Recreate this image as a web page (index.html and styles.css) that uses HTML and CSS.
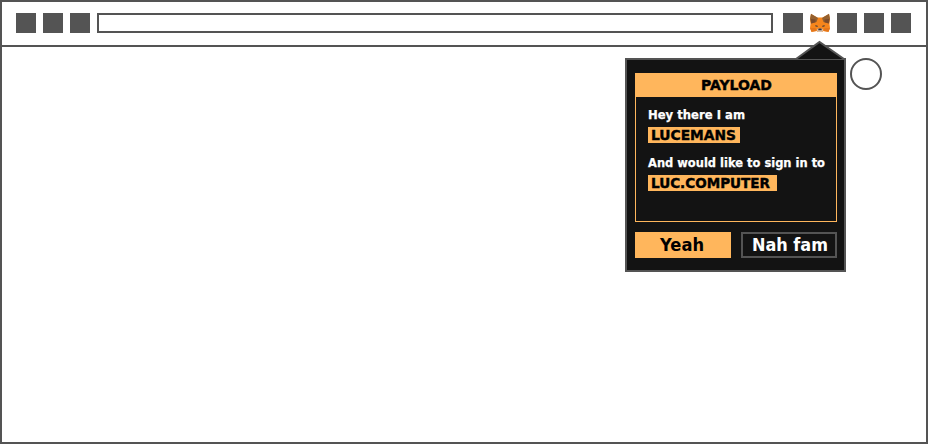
FILE: index.html
```html
<!DOCTYPE html>
<html lang="en">
<head>
<meta charset="utf-8">
<title>Sign in</title>
<link rel="stylesheet" href="styles.css">
</head>
<body>
<div class="browser">
  <header class="toolbar">
    <i class="tool"></i><i class="tool"></i><i class="tool"></i>
    <div class="address"></div>
    <i class="tool"></i>
    <svg class="fox" viewBox="0 0 20 20">
      <path fill="#f6851b" d="M1 1 7.500 4.500h5L19 1l1 5-.5 5 .5 4-1.500 4-5-1-1.500 1H8l-1.500-1-5 1L0 15l.5-4L0 6z"/>
      <path fill="#e4761b" d="M0 15h5.500l1 3-5 .8zM20 15h-5.500l-1 3 5 .8z"/>
      <path fill="#94602f" d="M1 .8 8 5 6.500 9 1.200 10.500 0 6zM19 .8 12 5l1.500 4 5.300 1.500L20 6z"/>
      <path fill="#7a4a2b" d="M1 6 5.500 6.500 5.500 9.200 1.200 10.500zM19 6l-4.500.5v2.700l4.300 1.300z"/>
      <path fill="#5f4535" d="m5.300 12 2.400.8v1.200l-2.200-.6zM14.700 12l-2.400.8v1.200l2.200-.6z"/>
      <path fill="#d8c2af" d="m8 15.500-1.300 1.700L8.200 19h3.600l1.500-1.800-1.300-1.700z"/>
      <path fill="#3a3030" d="M8.500 15.500h3l.3 1.800H8.200z"/>
    </svg>
    <i class="tool"></i><i class="tool"></i><i class="tool"></i>
  </header>
  <main class="page">
    <section class="popup">
      <svg class="arrow" viewBox="0 0 50 18"><path d="M1 18 24.500 1 49 18"/></svg>
      <div class="card">
        <h1 class="title"><svg class="label" width="202" height="24"><text x="66" y="17" textLength="71" lengthAdjust="spacingAndGlyphs">PAYLOAD</text></svg></h1>
        <div class="message">
          <svg class="copy" width="188" height="18"><text x="0" y="12" textLength="97" lengthAdjust="spacingAndGlyphs">Hey there I am</text></svg>
          <div class="tag name"><svg class="label" width="92" height="16"><text x="3" y="13" textLength="85" lengthAdjust="spacingAndGlyphs">LUCEMANS</text></svg></div>
          <svg class="copy" width="188" height="18"><text x="0" y="12" textLength="177" lengthAdjust="spacingAndGlyphs">And would like to sign in to</text></svg>
          <div class="tag site"><svg class="label" width="129" height="16"><text x="3" y="13" textLength="119" lengthAdjust="spacingAndGlyphs">LUC.COMPUTER</text></svg></div>
        </div>
      </div>
      <div class="actions">
        <button class="button accept"><svg width="96" height="26"><text x="25" y="19" textLength="44" lengthAdjust="spacingAndGlyphs">Yeah</text></svg></button>
        <button class="button decline"><svg width="96" height="26"><text x="11" y="19" textLength="76" lengthAdjust="spacingAndGlyphs">Nah fam</text></svg></button>
      </div>
    </section>
    <div class="circle"></div>
  </main>
</div>
</body>
</html>
```
FILE: styles.css
```css
* { box-sizing: border-box; }
body { margin: 0; background: #fff; font-family: "DejaVu Sans", sans-serif; font-weight: 700; }
svg { display: block; overflow: visible; }
.browser { width: 928px; height: 444px; border: 2px solid #545454; overflow: hidden; }
.toolbar { height: 45px; padding: 11px 15px 0 14px; border-bottom: 2px solid #545454; display: flex; gap: 7px; }
.tool { width: 20px; height: 20px; background: #545454; }
.address { width: 676px; height: 20px; border: 2px solid #545454; margin-right: 3px; }
.fox { width: 20px; height: 20px; }
.page { display: flex; align-items: flex-start; gap: 4px; padding: 11px 0 0 623px; }
.popup { position: relative; width: 221px; height: 214px; padding: 13px 7px 12px 8px; border: 2px solid #545454; background: #131313; }
.arrow { position: absolute; left: 168px; top: -19px; width: 50px; height: 18px; }
.arrow path { fill: #131313; stroke: #545454; stroke-width: 2; }
.card { width: 202px; height: 149px; border: 1px solid #ffb65c; }
.title { width: 202px; height: 24px; margin: -1px 0 0 -1px; background: #ffb65c; }
.message { padding: 10px 0 0 12px; }
.copy { height: 20px; font-size: 12px; fill: #fff; stroke: #fff; stroke-width: .25px; }
.label { font-size: 13.5px; fill: #000; stroke: #000; stroke-width: .4px; }
.tag { height: 16px; background: #ffb65c; margin-bottom: 12px; }
.name { width: 92px; }
.site { width: 129px; }
.actions { display: flex; gap: 10px; margin-top: 10px; }
.button { width: 96px; height: 26px; padding: 0; border: 0; border-radius: 0; font: 700 17px "DejaVu Sans", sans-serif; }
.accept { background: #ffb65c; }
.decline { background: #131313; box-shadow: inset 0 0 0 2px #545454; fill: #fff; }
.circle { width: 32px; height: 32px; border: 2px solid #545454; border-radius: 50%; }
```
